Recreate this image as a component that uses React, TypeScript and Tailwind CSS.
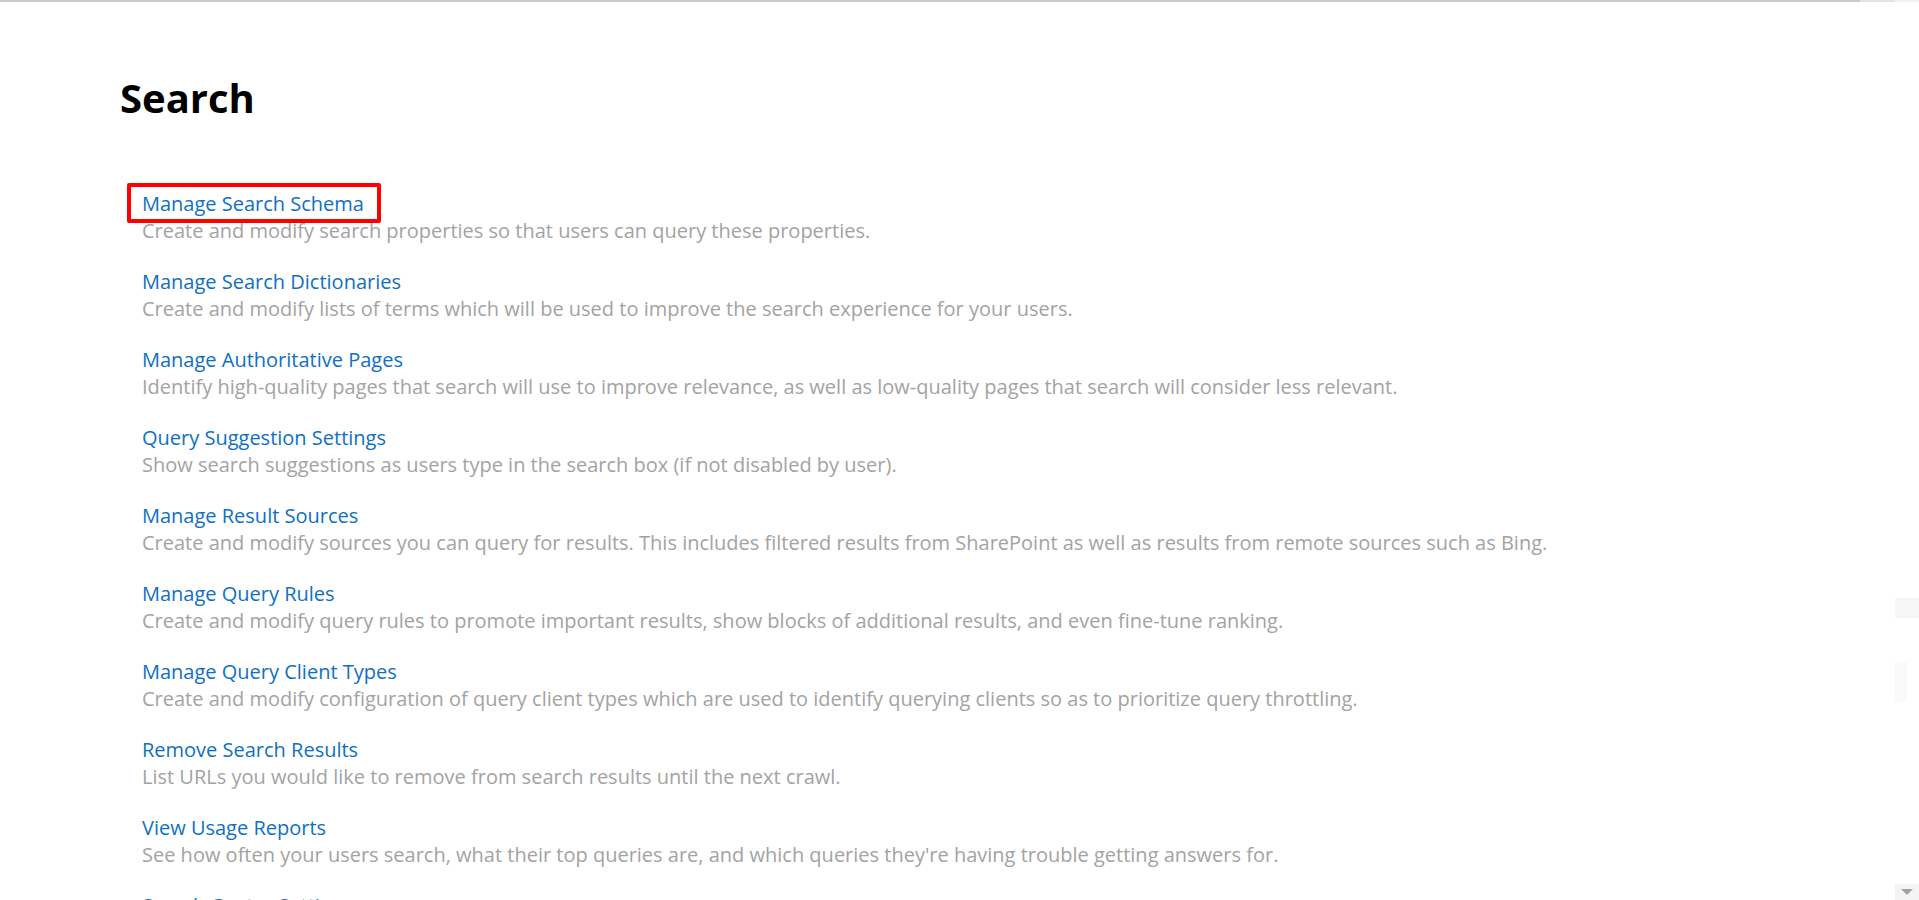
import React from "react";

const items: { title: string; desc: string }[] = [
  { title: "Manage Search Schema", desc: "Create and modify search properties so that users can query these properties." },
  { title: "Manage Search Dictionaries", desc: "Create and modify lists of terms which will be used to improve the search experience for your users." },
  { title: "Manage Authoritative Pages", desc: "Identify high-quality pages that search will use to improve relevance, as well as low-quality pages that search will consider less relevant." },
  { title: "Query Suggestion Settings", desc: "Show search suggestions as users type in the search box (if not disabled by user)." },
  { title: "Manage Result Sources", desc: "Create and modify sources you can query for results. This includes filtered results from SharePoint as well as results from remote sources such as Bing." },
  { title: "Manage Query Rules", desc: "Create and modify query rules to promote important results, show blocks of additional results, and even fine-tune ranking." },
  { title: "Manage Query Client Types", desc: "Create and modify configuration of query client types which are used to identify querying clients so as to prioritize query throttling." },
  { title: "Remove Search Results", desc: "List URLs you would like to remove from search results until the next crawl." },
  { title: "View Usage Reports", desc: "See how often your users search, what their top queries are, and which queries they're having trouble getting answers for." },
  { title: "Search Center Settings", desc: "Configure the search center URL used by search results." },
];

export default function App() {
  return (
    <div className="relative h-[900px] w-full overflow-hidden bg-white" style={{ fontFamily: '"Open Sans", "Noto Sans", sans-serif' }}>
      {/* top border line */}
      <div className="absolute left-0 top-0 flex h-[2px] w-full">
        <div className="h-[2px] w-[1860px] bg-[#c9c9c9]" />
        <div className="h-[2px] w-[35px] bg-[#e4e4e4]" />
        <div className="h-[2px] flex-1 bg-[#f2f2f2]" />
      </div>

      <div className="pl-[120px] pt-[74px]">
        <h1 className="text-[40px] font-bold leading-[48px] text-black">Search</h1>
        <div className="mt-[61px] pl-[7px]">
          {items.map((it, i) => (
            <div key={it.title} className="h-[78px]">
              <div className="inline-block">
                <div
                  className={
                    i === 0
                      ? "rounded-[2px] border-[4px] border-[#ff0000] pl-[11px] pr-[13px] pt-[3px] leading-[27px]"
                      : "border-[4px] border-transparent pl-[11px] pr-[13px] pt-[3px] leading-[27px]"
                  }
                >
                  <a className="text-[20px] text-[#0f6fc6]" href="#">
                    {it.title}
                  </a>
                </div>
              </div>
              <div className="-mt-[7px] pl-[15px] text-[20px] leading-[30px] text-[#a3a3a3]">{it.desc}</div>
            </div>
          ))}
        </div>
      </div>

      {/* faint scrollbar */}
      <div className="absolute right-0 top-[598px] h-[20px] w-[24px] bg-[#f6f6f6]" />
      <div className="absolute right-[12px] top-[662px] h-[40px] w-[12px] bg-[#fafafa]" />
      <div className="absolute bottom-0 right-0 flex h-[16px] w-[24px] items-center justify-center bg-[#f4f4f4]">
        <svg width="12" height="7" viewBox="0 0 12 7">
          <path d="M0 0 L12 0 L6 6 Z" fill="#a3a3a3" />
        </svg>
      </div>
    </div>
  );
}
